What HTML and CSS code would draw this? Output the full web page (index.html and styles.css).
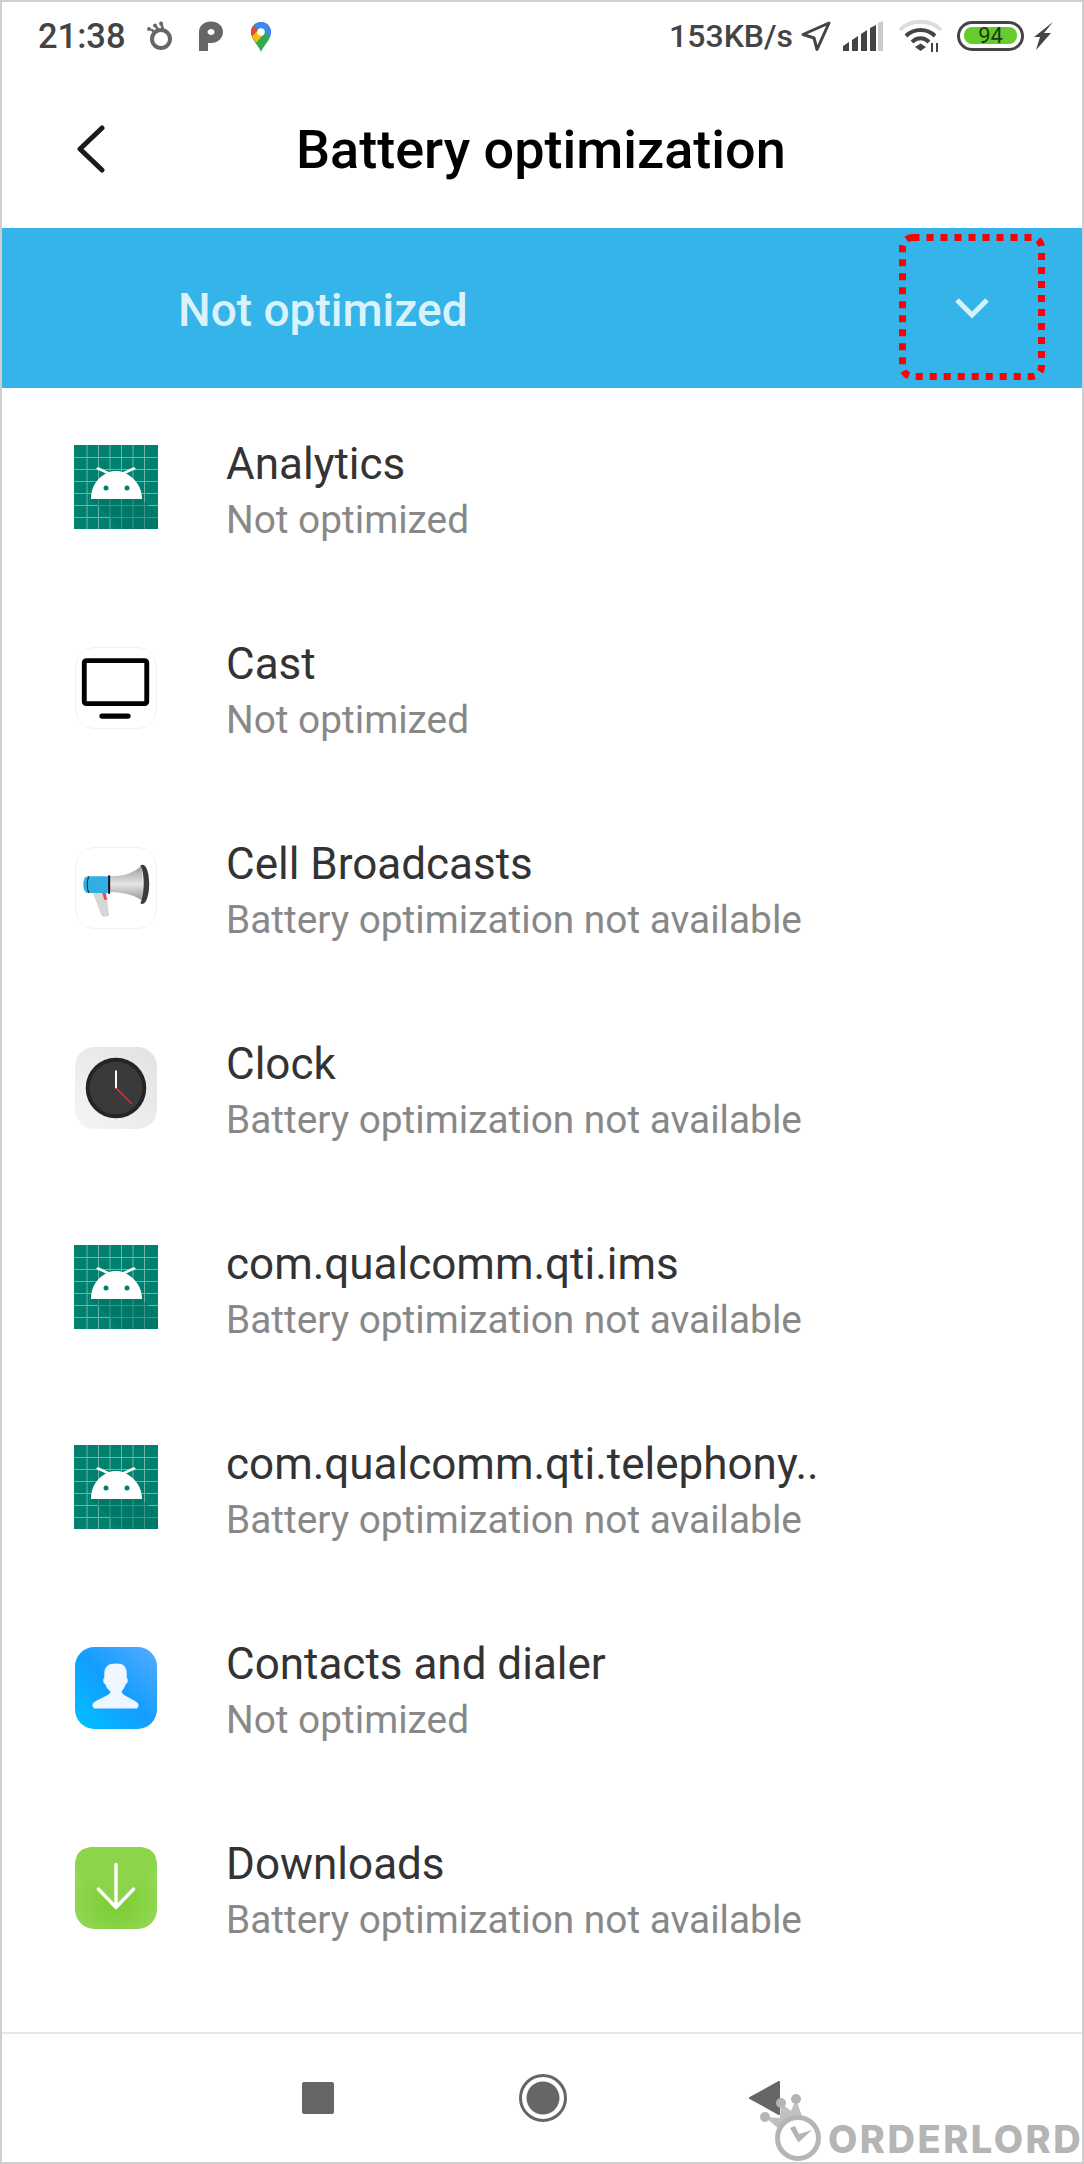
FILE: index.html
```html
<!DOCTYPE html>
<html lang="en">
<head>
    <meta charset="UTF-8">
    <meta name="viewport" content="width=device-width, initial-scale=1.0">
    <title>Battery optimization</title>
    <link rel="stylesheet" href="styles.css">
</head>
<body>
    <svg class="defs" width="0" height="0">
        <symbol id="android" viewBox="0 0 84 84">
            <rect width="84" height="84" fill="#00806f"/>
            <path d="M0 12.500H84M0 24.500H84M0 36.500H84M0 48.500H84M0 60.500H84M0 72.500H84M13 0V84M24.500 0V84M36 0V84M47.500 0V84M59 0V84M70.500 0V84" stroke="#6fb3a9" stroke-width="1" fill="none"/>
            <path d="M17 54H68L84 70V84H47Z" fill="#006f60" opacity=".45"/>
            <path d="M17 54C17 42 23 33 32 28.500L22 24 24 22 35 27C39 25.500 45 25.500 49 27L60 22 62 24 52 28.500C61 33 68 42 68 54Z" fill="#fff"/>
            <circle cx="32" cy="43" r="2.500" fill="#00806f"/>
            <circle cx="53" cy="43" r="2.500" fill="#00806f"/>
        </symbol>
    </svg>

    <div class="phone">
        <div class="status">
            <div class="status-left">
                <span class="time">21:38</span>
                <svg class="ic-ring" width="27" height="30" viewBox="0 0 27 30"><circle cx="15" cy="18" r="9" fill="none" stroke="#666" stroke-width="4"/><path d="M12 8 9 4.500M17 8 15 2M5 8.500 8 10.500" stroke="#666" stroke-width="2.500" fill="none"/><circle cx="15" cy="2.500" r="2" fill="#666"/><circle cx="9" cy="4.500" r="2" fill="#666"/><circle cx="3" cy="8" r="2" fill="#666"/></svg>
                <svg class="ic-p" width="24" height="30" viewBox="0 0 24 30"><path fill-rule="evenodd" d="M0 30V11C0 5 5 .5 12 .5S24 5 24 11 19 22 12 22H9V30ZM12 8C10 8 8.500 9.500 8.500 11S10 14 12 14 15.500 12.800 15.500 11 14 8 12 8Z" fill="#666"/></svg>
                <svg class="ic-maps" width="22" height="31" viewBox="0 0 22 31">
                    <path d="M11 31C9 25 1 19 1 11 1 5 5.500 1 11 1S21 5 21 11C21 19 13 25 11 31Z" fill="#34a853"/>
                    <path d="M3.500 4.500C5.300 2.300 8 1 11 1 14 1 16.600 2.300 18.500 4.500L14 9 8 8Z" fill="#4285f4"/>
                    <path d="M18.500 4.500C20 6.200 21 8.500 21 11 21 13 20.400 14.800 19.500 16.500L14 11Z" fill="#4285f4"/>
                    <path d="M3.500 4.500C2 6.200 1 8.500 1 11 1 12.500 1.300 14 2 15.300L8 9.500Z" fill="#ea4335"/>
                    <path d="M2 15.300C3 17.600 4.700 19.800 6.200 21.800L14 13 8 9.500Z" fill="#fbbc04"/>
                    <circle cx="11" cy="11" r="3.800" fill="#fff"/>
                </svg>
            </div>
            <div class="status-right">
                <span class="speed">153KB/s</span>
                <svg class="ic-loc" width="30" height="31" viewBox="0 0 30 31"><path d="M28 2 2 13.500 13 17 16 28.500Z" fill="none" stroke="#444" stroke-width="3" stroke-linejoin="round"/></svg>
                <svg class="ic-signal" width="40" height="30" viewBox="0 0 40 30"><path d="M0 30V25L6 21V30ZM9 30V19L15 15V30ZM18 30V13L24 9V30Z M27 30V7L33 4V30Z" fill="#444"/><path d="M35 30V2L40 0V30Z" fill="#ccc"/></svg>
                <svg class="ic-wifi" width="44" height="32" viewBox="0 0 44 32"><path d="M1 10C11 -1 32 -1 42 10" fill="none" stroke="#ddd" stroke-width="4"/><path d="M7 16C15 8 28 8 36 16M13 22C18 17 25 17 30 22" fill="none" stroke="#444" stroke-width="4"/><path d="M16 27 21.500 23.500 27 27 21.500 31Z" fill="#444"/><path d="M33 23V32M38 23V32" stroke="#444" stroke-width="2"/></svg>
                <div class="battery"><div class="battery-fill">94</div></div>
                <svg class="ic-bolt" width="19" height="30" viewBox="0 0 19 30"><path d="M19 1 10 12H17L2 29 6 16H0Z" fill="#444"/></svg>
            </div>
        </div>

        <div class="header">
            <svg class="back" width="30" height="48" viewBox="0 0 30 48"><path d="M26 3 4 24 26 45" fill="none" stroke="#1a1a1a" stroke-width="5" stroke-linecap="round" stroke-linejoin="round"/></svg>
            <h1>Battery optimization</h1>
        </div>

        <div class="band">
            <span class="band-label">Not optimized</span>
            <svg class="chevron" width="34" height="22" viewBox="0 0 34 22"><path d="M2 3 17 18 32 3" fill="none" stroke="#d6f1fb" stroke-width="5"/></svg>
            <svg class="marker" width="146" height="146" viewBox="0 0 146 146"><rect x="3.500" y="3.500" width="139" height="139" rx="10" fill="none" stroke="#ff0000" stroke-width="7" stroke-dasharray="7 7"/></svg>
        </div>

        <ul class="apps">
            <li class="app">
                <svg class="icon" viewBox="0 0 84 84"><use href="#android"/></svg>
                <div class="app-text"><div class="app-name">Analytics</div><div class="app-state">Not optimized</div></div>
            </li>
            <li class="app">
                <svg class="icon icon-round" viewBox="0 0 84 84">
                    <rect x=".5" y=".5" width="83" height="83" rx="20" fill="#fff" stroke="#f1f1f1"/>
                    <rect x="9.500" y="14" width="64" height="44" rx="2" fill="none" stroke="#000" stroke-width="5"/>
                    <rect x="25" y="68" width="32" height="5.500" rx="2.700" fill="#000"/>
                </svg>
                <div class="app-text"><div class="app-name">Cast</div><div class="app-state">Not optimized</div></div>
            </li>
            <li class="app">
                <svg class="icon icon-round" viewBox="0 0 84 84">
                    <defs>
                        <linearGradient id="horn" x1="0" y1="0" x2="0" y2="1"><stop offset="0" stop-color="#9a9a9a"/><stop offset=".5" stop-color="#e4e4e4"/><stop offset="1" stop-color="#8e8e8e"/></linearGradient>
                    </defs>
                    <rect x=".5" y=".5" width="83" height="83" rx="20" fill="#fff" stroke="#f1f1f1"/>
                    <path d="M18 46H32L35 70C33 72 28 72 27 70Z" fill="#d6d6d6"/>
                    <path d="M28 47 31 46 33 54 30 54Z" fill="#f04a4a"/>
                    <path d="M35 30C50 30 60 27 68 19L72 57C64 50 50 46 35 46Z" fill="url(#horn)"/>
                    <path d="M67 19C73 15 76 27 76 38S73 61 67 58C71 50 72 28 67 19Z" fill="#3a3a3a"/>
                    <path d="M13 30H35V47H13C7 47 7 30 13 30Z" fill="#33aee3"/>
                    <path d="M35 29V48" stroke="#111" stroke-width="2"/>
                    <path d="M14 30C12 36 12 41 14 47" stroke="#123" stroke-width="1" fill="none"/>
                </svg>
                <div class="app-text"><div class="app-name">Cell Broadcasts</div><div class="app-state">Battery optimization not available</div></div>
            </li>
            <li class="app">
                <svg class="icon icon-round" viewBox="0 0 84 84">
                    <defs>
                        <linearGradient id="clockbg" x1="1" y1="0" x2="0" y2="1"><stop offset="0" stop-color="#e2e2e2"/><stop offset="1" stop-color="#f5f5f5"/></linearGradient>
                    </defs>
                    <rect width="84" height="84" rx="20" fill="url(#clockbg)"/>
                    <circle cx="42" cy="42" r="29" fill="#3a3a3a" stroke="#252525" stroke-width="4"/>
                    <path d="M42 42.500V24" stroke="#fff" stroke-width="2"/>
                    <path d="M42 42 58 58" stroke="#e2403f" stroke-width="1.200"/>
                </svg>
                <div class="app-text"><div class="app-name">Clock</div><div class="app-state">Battery optimization not available</div></div>
            </li>
            <li class="app">
                <svg class="icon" viewBox="0 0 84 84"><use href="#android"/></svg>
                <div class="app-text"><div class="app-name">com.qualcomm.qti.ims</div><div class="app-state">Battery optimization not available</div></div>
            </li>
            <li class="app">
                <svg class="icon" viewBox="0 0 84 84"><use href="#android"/></svg>
                <div class="app-text"><div class="app-name">com.qualcomm.qti.telephony..</div><div class="app-state">Battery optimization not available</div></div>
            </li>
            <li class="app">
                <svg class="icon icon-round" viewBox="0 0 84 84">
                    <defs>
                        <linearGradient id="contacts" x1="0" y1="1" x2="1" y2="0"><stop offset="0" stop-color="#00c2ff"/><stop offset=".5" stop-color="#139dff"/><stop offset="1" stop-color="#55acff"/></linearGradient>
                    </defs>
                    <rect width="84" height="84" rx="20" fill="url(#contacts)"/>
                    <path d="M30 28C30 20 34 17 42 17S53 20 53 28V32C55 32 54 38 52 38 51 42 49 44 48 45V47C52 51 61 54 64 57 66 59 65 63 62 63H21C18 63 17 59 19 57 22 54 32 51 36 47V45C34 44 32 42 31 38 29 38 28 32 30 32Z" fill="#eef7ff"/>
                </svg>
                <div class="app-text"><div class="app-name">Contacts and dialer</div><div class="app-state">Not optimized</div></div>
            </li>
            <li class="app">
                <svg class="icon icon-round" viewBox="0 0 84 84">
                    <defs>
                        <radialGradient id="dl" cx=".5" cy=".65" r=".7"><stop offset="0" stop-color="#78cc30"/><stop offset="1" stop-color="#9adb5c"/></radialGradient>
                    </defs>
                    <rect width="84" height="84" rx="20" fill="url(#dl)"/>
                    <path d="M0 24 42 62 84 24V20C84 6 78 0 64 0H20C6 0 0 6 0 20Z" fill="#8cd44a"/>
                    <path d="M42 18V62M24 43 42 62 60 43" fill="none" stroke="#fff" stroke-width="3.500" stroke-linecap="round" stroke-linejoin="round"/>
                </svg>
                <div class="app-text"><div class="app-name">Downloads</div><div class="app-state">Battery optimization not available</div></div>
            </li>
        </ul>

        <div class="nav">
            <div class="nav-square"></div>
            <svg class="nav-home" width="48" height="48" viewBox="0 0 48 48"><circle cx="24" cy="24" r="22.500" fill="none" stroke="#666" stroke-width="3"/><circle cx="24" cy="24" r="16.500" fill="#666"/></svg>
            <svg class="nav-back" width="32" height="36" viewBox="0 0 32 36"><path d="M31 2V34L2 18Z" fill="#666" stroke="#666" stroke-width="2" stroke-linejoin="round"/></svg>
        </div>

        <div class="watermark">
            <svg width="72" height="96" viewBox="0 0 72 96">
                <path d="M7 47 22 60 46 52 38 29 33 41 23 33 22 48Z" fill="#b5b5b5" fill-opacity=".85"/>
                <circle cx="7" cy="47" r="5" fill="#b5b5b5"/>
                <circle cx="23" cy="33" r="5" fill="#b5b5b5"/>
                <circle cx="38" cy="29" r="5" fill="#b5b5b5"/>
                <circle cx="40" cy="68" r="20.500" fill="#fff" stroke="#b5b5b5" stroke-width="5"/>
                <path d="M40 72 32 58 37 56 41 64 54 60 41 72Z" fill="#b5b5b5"/>
            </svg>
            <span class="watermark-text">ORDERLORD</span>
        </div>
    </div>
</body>
</html>
```

FILE: styles.css
```css
* {
    margin: 0;
    padding: 0;
    box-sizing: border-box;
}
body {
    font-family: 'Roboto', 'Liberation Sans', sans-serif;
    background: #fff;
    width: 1084px;
    height: 2164px;
    overflow: hidden;
}
svg {
    display: block;
    flex-shrink: 0;
}
.defs {
    position: absolute;
}
.phone {
    position: relative;
    width: 1084px;
    height: 2164px;
    border: 2px solid #cfcfcf;
    display: flex;
    flex-direction: column;
    overflow: hidden;
}

/* status bar */
.status {
    height: 70px;
    padding: 16px 29px 0 36px;
    display: flex;
    justify-content: space-between;
    align-items: flex-start;
    color: #444;
    font-weight: 500;
}
.status-left, .status-right {
    display: flex;
    align-items: center;
    height: 36px;
}
.time {
    font-size: 34.500px;
}
.ic-ring {
    margin-left: 20px;
}
.ic-p {
    margin-left: 26px;
}
.ic-maps {
    margin-left: 27px;
}
.speed {
    font-size: 32px;
}
.ic-loc {
    margin-left: 8px;
}
.ic-signal {
    margin-left: 12px;
}
.ic-wifi {
    margin-left: 16px;
}
.battery {
    width: 67px;
    height: 30px;
    margin-left: 14px;
    border: 3.500px solid #444;
    border-radius: 15px;
    padding: 3px;
}
.battery-fill {
    height: 17px;
    width: 53px;
    margin: 0 auto;
    background: #66cc2e;
    border-radius: 8px;
    color: #1c3a10;
    font-size: 22px;
    line-height: 17px;
    text-align: center;
    font-weight: 400;
}
.ic-bolt {
    margin-left: 10px;
}

/* title */
.header {
    height: 156px;
    display: flex;
    align-items: center;
    padding-left: 74px;
    padding-bottom: 2px;
}
h1 {
    margin-left: 190px;
    font-size: 54px;
    font-weight: 500;
    color: #000;
}

.band {
    position: relative;
    height: 160px;
    background: #34b4e8;
    display: flex;
    align-items: center;
    justify-content: space-between;
    padding: 0 93px 0 176px;
}
.band-label {
    font-size: 46px;
    font-weight: 500;
    color: #d9f2fb;
    margin-top: 4px;
}
.marker {
    position: absolute;
    left: 897px;
    top: 6px;
}

/* app list */
.apps {
    list-style: none;
    flex: 1;
    padding-top: 4px;
}
.app {
    height: 200px;
    display: flex;
    align-items: center;
    padding-left: 72px;
}
.icon {
    width: 84px;
    height: 84px;
    margin-bottom: 10px;
}
.icon-round {
    width: 82px;
    height: 82px;
    margin-left: 1px;
    margin-right: 1px;
    margin-bottom: 9px;
}
.app-text {
    margin-left: 68px;
    margin-bottom: 4px;
    display: flex;
    flex-direction: column;
    gap: 7px;
}
.app-name {
    font-size: 44px;
    line-height: 52px;
    color: #333;
}
.app-state {
    font-size: 38.800px;
    line-height: 45px;
    color: #888;
}

/* bottom nav */
.nav {
    height: 130px;
    border-top: 2px solid #e6e6e6;
    display: flex;
    align-items: center;
    padding-left: 300px;
}
.nav-square {
    width: 32px;
    height: 32px;
    background: #666;
    border-radius: 2px;
}
.nav-home {
    margin-left: 185px;
}
.nav-back {
    margin-left: 181px;
}
.watermark {
    position: absolute;
    left: 756px;
    bottom: -4px;
    display: flex;
    align-items: flex-end;
}
.watermark-text {
    font-family: 'Inter', 'Liberation Sans', sans-serif;
    font-size: 38px;
    font-weight: 800;
    letter-spacing: 2.500px;
    line-height: 46px;
    color: #b5b5b5;
    margin-left: -2px;
    margin-bottom: 4px;
}
```
